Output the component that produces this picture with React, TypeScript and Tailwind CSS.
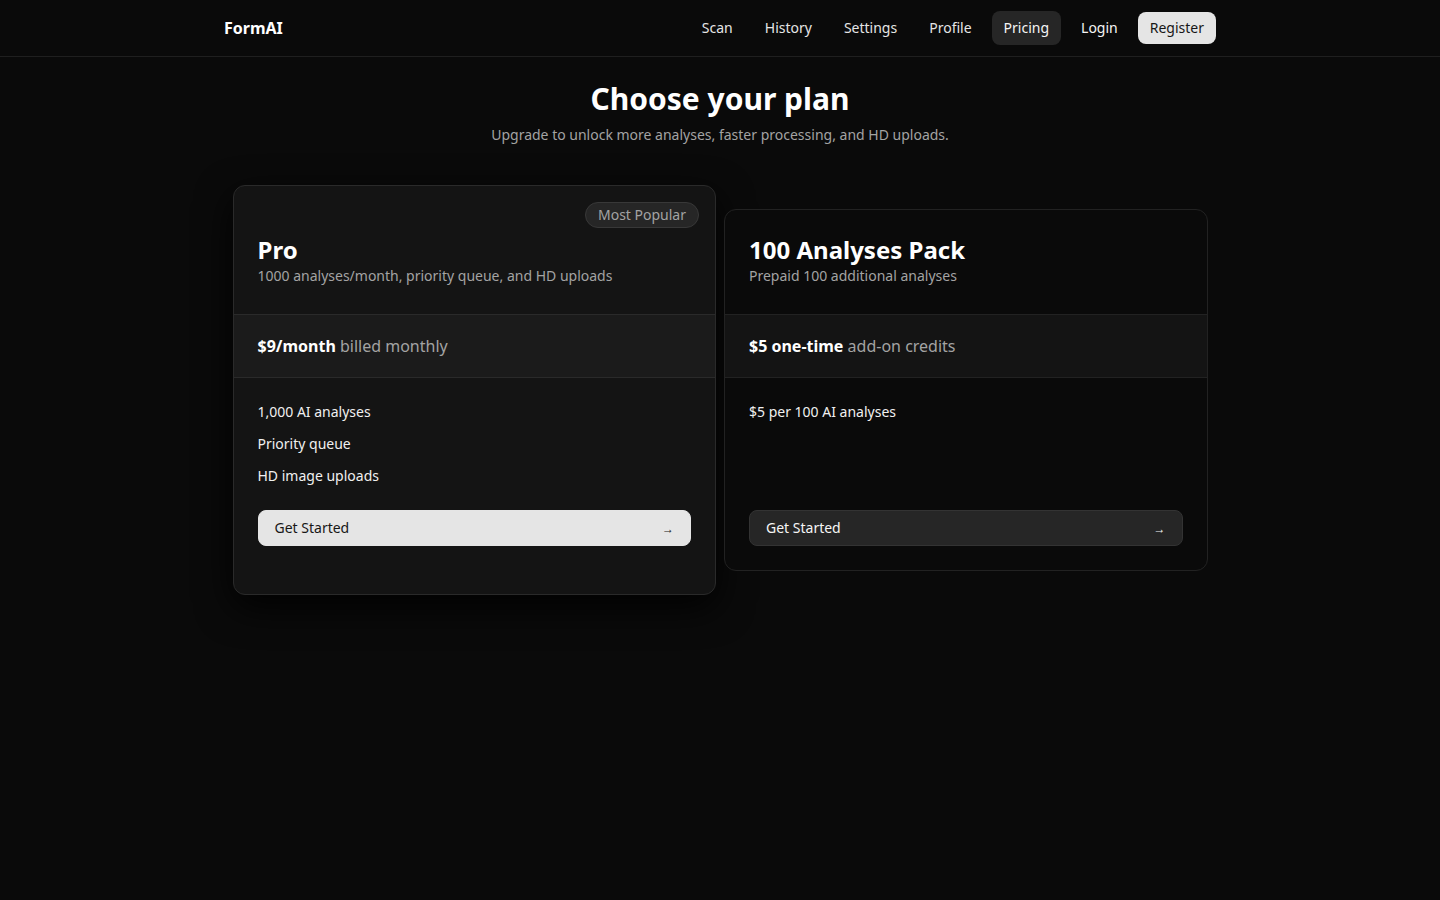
import { ReactNode } from 'react';

const navLinks = ['Scan', 'History', 'Settings', 'Profile', 'Pricing'];

interface Plan {
  name: string;
  blurb: string;
  price: string;
  priceNote: string;
  features: string[];
  featured?: boolean;
}

const plans: Plan[] = [
  {
    name: 'Pro',
    blurb: '1000 analyses/month, priority queue, and HD uploads',
    price: '$9/month',
    priceNote: 'billed monthly',
    features: ['1,000 AI analyses', 'Priority queue', 'HD image uploads'],
    featured: true,
  },
  {
    name: '100 Analyses Pack',
    blurb: 'Prepaid 100 additional analyses',
    price: '$5 one-time',
    priceNote: 'add-on credits',
    features: ['$5 per 100 AI analyses'],
  },
];

function Header() {
  return (
    <header className="border-b border-[#1f1f1f]">
      <div className="mx-auto flex h-14 max-w-[992px] items-center justify-between">
        <span className="text-base font-bold text-white">FormAI</span>
        <nav className="flex items-center gap-2 text-sm">
          {navLinks.map((l) => (
            <a
              key={l}
              className={
                l === 'Pricing'
                  ? 'rounded-lg bg-[#262626] px-3 py-[7px] text-[#f5f5f5]'
                  : 'rounded-lg px-3 py-[7px] text-[#e5e5e5]'
              }
            >
              {l}
            </a>
          ))}
          <a className="-mt-px px-3 py-[7px] text-[#f5f5f5]">Login</a>
          <a className="-mt-px rounded-lg bg-[#e5e5e5] px-3 py-[6px] text-[#171717]">
            Register
          </a>
        </nav>
      </div>
    </header>
  );
}

function Badge({ children }: { children: ReactNode }) {
  return (
    <span className="absolute right-4 top-4 rounded-full border border-[#383838] bg-[#262626] px-3 py-[2px] text-sm text-[#a3a3a3]">
      {children}
    </span>
  );
}

function PlanCard({ plan }: { plan: Plan }) {
  const featured = plan.featured;
  return (
    <div
      className={
        featured
          ? 'relative -my-6 flex flex-col rounded-xl border border-[#2a2a2a] bg-[#141414] py-6 shadow-[0_12px_36px_rgba(0,0,0,0.9)]'
          : 'relative flex flex-col rounded-xl border border-[#222222] bg-[#0a0a0a]'
      }
    >
      {featured && <Badge>Most Popular</Badge>}
      <div className="px-6 pb-7 pt-6">
        <h2 className="text-2xl font-bold leading-8 text-white">{plan.name}</h2>
        <p className="text-sm text-[#a3a3a3]">{plan.blurb}</p>
      </div>
      <div
        className={
          featured
            ? 'border-y border-[#2a2a2a] bg-[#1b1b1b] px-6 py-[19px] leading-6'
            : 'border-y border-[#222222] bg-[#141414] px-6 py-[19px] leading-6'
        }
      >
        <span className="font-bold text-white">{plan.price}</span>{' '}
        <span className="text-[#a3a3a3]">{plan.priceNote}</span>
      </div>
      <div className="flex flex-1 flex-col px-6 pb-6 pt-6">
        <ul className="flex flex-1 flex-col gap-3 text-sm text-[#f0f0f0]">
          {plan.features.map((f) => (
            <li key={f}>{f}</li>
          ))}
        </ul>
        <button
          className={
            featured
              ? 'mt-6 flex h-9 w-full items-center justify-between rounded-lg border border-[#e5e5e5] bg-[#e5e5e5] px-4 text-sm text-[#171717]'
              : 'mt-6 flex h-9 w-full items-center justify-between rounded-lg border border-[#333333] bg-[#262626] px-4 text-sm text-[#f5f5f5]'
          }
        >
          <span>Get Started</span>
          <span className="mt-[2px] text-xs">→</span>
        </button>
      </div>
    </div>
  );
}

export default function App() {
  return (
    <div
      className="min-h-screen bg-[#0a0a0a] text-white"
      style={{ fontFamily: '"Noto Sans", "Open Sans", sans-serif' }}
    >
      <Header />
      <main className="mx-auto max-w-[975px] pb-16">
        <div className="pt-6 text-center">
          <h1 className="text-3xl font-bold leading-9 text-white">Choose your plan</h1>
          <p className="mt-2 text-sm text-[#a3a3a3]">
            Upgrade to unlock more analyses, faster processing, and HD uploads.
          </p>
        </div>
        <div className="mt-16 grid grid-cols-2 gap-2">
          {plans.map((p) => (
            <PlanCard key={p.name} plan={p} />
          ))}
        </div>
      </main>
    </div>
  );
}
